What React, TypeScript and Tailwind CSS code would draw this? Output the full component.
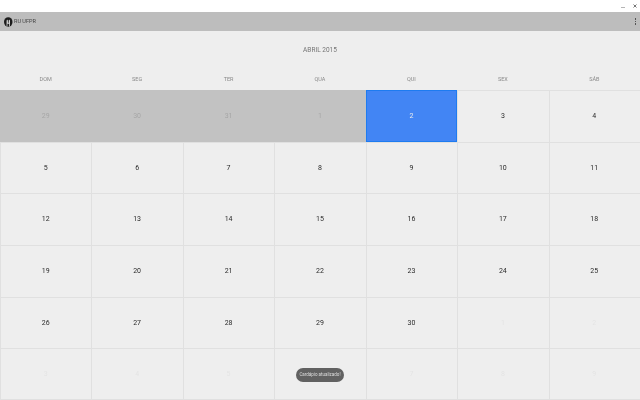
import React from "react";

const days = ["DOM", "SEG", "TER", "QUA", "QUI", "SEX", "SÁB"];
const cells: { n: number; k: "prev" | "today" | "cur" | "next" }[] = [
  ...[29, 30, 31, 1].map((n) => ({ n, k: "prev" as const })),
  { n: 2, k: "today" as const },
  ...Array.from({ length: 28 }, (_, i) => ({ n: i + 3, k: "cur" as const })),
  ...Array.from({ length: 9 }, (_, i) => ({ n: i + 1, k: "next" as const })),
];

function Cell({ n, k, last }: { n: number; k: "prev" | "today" | "cur" | "next"; last: boolean }) {
  if (k === "prev")
    return (
      <div className="flex items-center justify-center bg-[#c2c2c2] text-[#a6a6a6]">
        <span className="grayscale">{n}</span>
      </div>
    );
  if (k === "today")
    return (
      <div className="flex items-center justify-center bg-[#4285f4] border border-[#1e7bf0] text-[#e3edff]">
        <span className="grayscale">{n}</span>
      </div>
    );
  return (
    <div
      className={
        "flex items-center justify-center pr-[1px] border-l border-t border-[#e0e0e0] " +
        (last ? "border-b " : "") +
        (k === "cur" ? "text-[#2a2a2a]" : "text-[#e4e4e4]")
      }
    >
      <span className="grayscale">{n}</span>
    </div>
  );
}

export default function App() {
  return (
    <div className="relative w-[640px] h-[400px] overflow-hidden bg-[#eeeeee] flex flex-col font-['Roboto','Liberation_Sans',sans-serif]">
      <div className="h-[12px] bg-white flex items-center justify-end gap-[8px] pr-[3px] shrink-0">
        <div className="w-[4px] h-[1px] bg-[#b5b5b5] mt-[3px]" />
        <svg width="4" height="4" viewBox="0 0 4 4" className="mb-[1px]">
          <path d="M0.5 0.5L3.5 3.5M3.5 0.5L0.5 3.5" stroke="#777" strokeWidth="1" />
        </svg>
      </div>
      <div className="h-[19px] bg-[#bdbdbd] flex items-center pl-[4px] pr-[4px] shrink-0">
        <svg width="9" height="10" viewBox="0 0 9 10" className="shrink-0">
          <ellipse cx="4.25" cy="5" rx="4.25" ry="4.8" fill="#1c1c1c" />
          <path d="M2.6 9.5V4.2Q2.6 2.8 3.3 2.8Q3.9 2.8 3.9 4.2V5.8H4.7V4.2Q4.7 2.8 5.3 2.8Q6 2.8 6 4.2V9.5H5.2V6.8H3.4V9.5Z" fill="#d8d8d8" />
        </svg>
        <span className="ml-[1px] text-[5.5px] leading-none text-[#444444] grayscale">RU UFPR</span>
        <div className="ml-auto flex flex-col gap-[1px]">
          <div className="w-[1.5px] h-[1.5px] bg-[#555555]" />
          <div className="w-[1.5px] h-[1.5px] bg-[#555555]" />
          <div className="w-[1.5px] h-[1.5px] bg-[#555555]" />
        </div>
      </div>
      <div className="h-[38px] pt-[1px] flex items-center justify-center text-[6.5px] text-[#757575] shrink-0">
        <span className="grayscale">ABRIL 2015</span>
      </div>
      <div className="h-[21px] grid grid-cols-7 items-center text-center text-[5.5px] text-[#8a8a8a] shrink-0">
        {days.map((d) => (
          <div key={d} className="grayscale">{d}</div>
        ))}
      </div>
      <div className="flex-1 grid grid-cols-7 grid-rows-6 text-[7px]">
        {cells.map((c, i) => (
          <Cell key={i} n={c.n} k={c.k} last={i >= 35} />
        ))}
      </div>
      <div className="absolute left-[296px] top-[368px] w-[48px] h-[14px] rounded-full bg-[#616161] flex items-center justify-center text-[4.5px] text-[#dddddd] whitespace-nowrap">
        <span className="grayscale">Cardápio atualizado!</span>
      </div>
    </div>
  );
}
